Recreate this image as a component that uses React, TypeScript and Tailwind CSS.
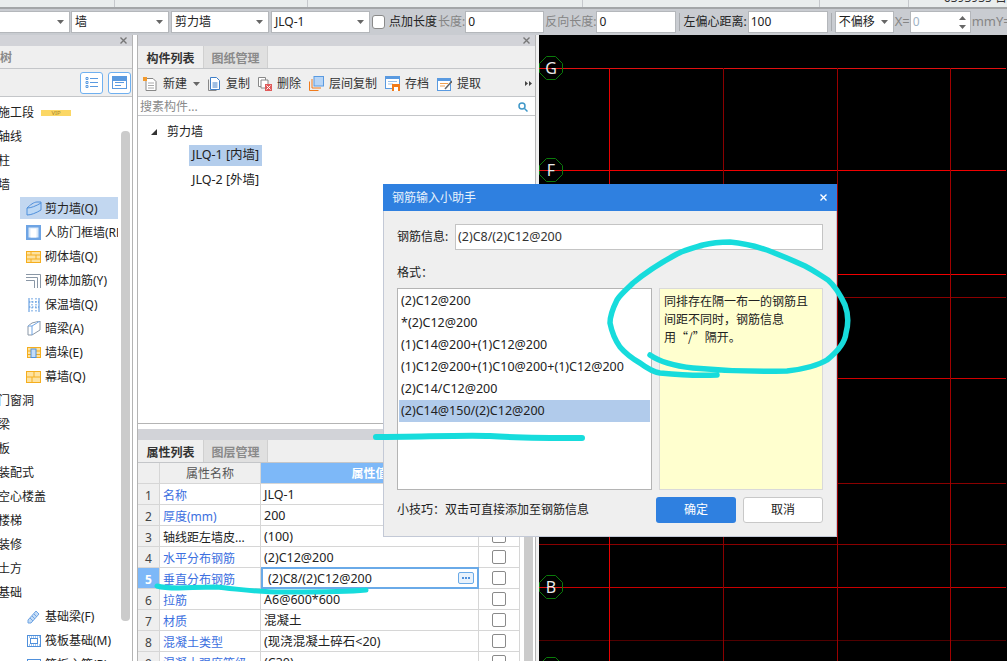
import type { ReactNode } from "react";

const FONT = "[font-family:'Noto_Sans','Noto_Sans_CJK_SC',sans-serif]";

function Caret({ className = "" }: { className?: string }) {
  return (
    <svg width="7" height="4" viewBox="0 0 7 4" className={className}>
      <path d="M0 0h7L3.5 4z" fill="#666" />
    </svg>
  );
}

function Close({ x = "#777" }: { x?: string }) {
  return (
    <svg width="7" height="7" viewBox="0 0 7 7">
      <path d="M0.5 0.5l6 6M6.5 0.5l-6 6" stroke={x} strokeWidth="1.4" />
    </svg>
  );
}

// tree icons
const wallIcon = (
  <svg width="16" height="15" viewBox="0 0 16 15" fill="none" stroke="#4f90dc">
    <path d="M1 7c4 0 9-2 14-5v7c-5 3-10 5-14 5z" fill="#bcd8f5" />
    <path d="M1 7c3-3 7-6 10-6h4v1" />
  </svg>
);
const doorIcon = (
  <svg width="15" height="15" viewBox="0 0 15 15">
    <rect width="15" height="15" fill="#6ea4e4" />
    <rect x="2.5" y="2.5" width="10" height="10" fill="#dbe9f8" />
    <rect x="4.5" y="3.5" width="6" height="9" fill="#fff" />
  </svg>
);
const brickIcon = (
  <svg width="15" height="12" viewBox="0 0 15 12" fill="#fde2a0" stroke="#f5ae1e">
    <rect x="0.5" y="0.5" width="14" height="11" />
    <path d="M0.5 4h14M0.5 8h14M5 0.5V4M10 4v4M5 8v3.500" fill="none" />
  </svg>
);
const rebarIcon = (
  <svg width="15" height="14" viewBox="0 0 15 14" fill="none" stroke="#8a97a6">
    <path d="M0 0.500h14.500V14M0 3.500h11.500V14M0 6.500h8.500V14" />
  </svg>
);
const insulationIcon = (
  <svg width="12" height="14" viewBox="0 0 12 14" fill="none" stroke="#4f90dc">
    <path d="M1 0v14M11 0v14" />
    <path d="M4 0v14M8 0v14M1 4h10M1 9h10" strokeDasharray="1.500 1.500" />
  </svg>
);
const beamIcon = (
  <svg width="14" height="15" viewBox="0 0 14 15" fill="#fff" stroke="#8a97a6">
    <path d="M1 5l4-3 8-2v9l-8 5H1z" />
    <path d="M1 5h4l8-5M5 5v9" stroke="#6ea4e4" />
  </svg>
);
const pierIcon = (
  <svg width="14" height="11" viewBox="0 0 14 11" fill="#fde2a0" stroke="#f5ae1e">
    <rect x="0.500" y="0.500" width="13" height="10" />
    <path d="M0.500 4h13M0.500 7.500h13" fill="none" />
    <rect x="4" y="2" width="5" height="8.500" fill="#c4dcf6" stroke="#4f90dc" />
  </svg>
);
const curtainIcon = (
  <svg width="15" height="12" viewBox="0 0 15 12" fill="#fde2a0" stroke="#f5ae1e">
    <rect x="0.500" y="0.500" width="14" height="11" />
    <path d="M0.500 6h14M8 0.500V6M6 6v5.500" fill="none" />
  </svg>
);
const footingIcon = (
  <svg width="13" height="14" viewBox="0 0 13 14" fill="#c4dcf6" stroke="#6ea4e4">
    <path d="M1 10L9 1l3 3-8 9H1z" />
    <path d="M3 8l3 3M5 6l3 3M7 4l3 3" />
  </svg>
);
const raftIcon = (
  <svg width="14" height="12" viewBox="0 0 14 12" fill="none" stroke="#4f90dc">
    <rect x="0.500" y="0.500" width="13" height="11" />
    <rect x="3.500" y="3.500" width="7" height="5" />
    <path d="M0 2h14M0 10h14" strokeDasharray="1 1" />
  </svg>
);
const raftBarIcon = (
  <svg width="14" height="12" viewBox="0 0 14 12" fill="none" stroke="#4f90dc">
    <rect x="0.500" y="0.500" width="13" height="11" />
    <path d="M7 2v7" stroke="#888" />
  </svg>
);

type TreeRow = { label: string; icon?: ReactNode; active?: boolean; vip?: boolean };

const treeRows: TreeRow[] = [
  { label: "施工段", vip: true },
  { label: "轴线" },
  { label: "柱" },
  { label: "墙" },
  { label: "剪力墙(Q)", icon: wallIcon, active: true },
  { label: "人防门框墙(RF", icon: doorIcon },
  { label: "砌体墙(Q)", icon: brickIcon },
  { label: "砌体加筋(Y)", icon: rebarIcon },
  { label: "保温墙(Q)", icon: insulationIcon },
  { label: "暗梁(A)", icon: beamIcon },
  { label: "墙垛(E)", icon: pierIcon },
  { label: "幕墙(Q)", icon: curtainIcon },
  { label: "门窗洞" },
  { label: "梁" },
  { label: "板" },
  { label: "装配式" },
  { label: "空心楼盖" },
  { label: "楼梯" },
  { label: "装修" },
  { label: "土方" },
  { label: "基础" },
  { label: "基础梁(F)", icon: footingIcon },
  { label: "筏板基础(M)", icon: raftIcon },
  { label: "筏板主筋(R)", icon: raftBarIcon },
];

const props = [
  { name: "名称", value: "JLQ-1", link: true },
  { name: "厚度(mm)", value: "200", link: true },
  { name: "轴线距左墙皮...", value: "(100)", link: false },
  { name: "水平分布钢筋", value: "(2)C12@200", link: true },
  { name: "垂直分布钢筋", value: "(2)C8/(2)C12@200", link: true, editing: true },
  { name: "拉筋", value: "A6@600*600", link: true },
  { name: "材质", value: "混凝土", link: true },
  { name: "混凝土类型", value: "(现浇混凝土碎石<20)", link: true },
  { name: "混凝土强度等级", value: "(C30)", link: true },
];

const formats = [
  "(2)C12@200",
  "*(2)C12@200",
  "(1)C14@200+(1)C12@200",
  "(1)C12@200+(1)C10@200+(1)C12@200",
  "(2)C14/C12@200",
  "(2)C14@150/(2)C12@200",
];

function ToolSelect({ label, width }: { label: string; width: string }) {
  return (
    <div className={`${width} h-[22px] bg-white border border-[#b4b7bb] flex items-center justify-between pl-[3px] pr-[5px] shrink-0`}>
      <span>{label}</span>
      <Caret />
    </div>
  );
}

function ToolInput({ value, width }: { value: string; width: string }) {
  return <div className={`${width} h-[22px] bg-white border border-[#b4b7bb] flex items-center pl-[2px] shrink-0`}>{value}</div>;
}

function TopBar() {
  return (
    <>
      <div className="h-[7px] bg-[#e9eded] flex overflow-hidden">
        <div className="w-[115px] border-r border-[#c5c8cc]" />
        <div className="w-[193px] border-r border-[#c5c8cc]" />
        <div className="w-[276px] border-r border-[#c5c8cc]" />
        <div className="w-[237px] border-r border-[#c5c8cc]" />
        <div className="w-[89px] border-r border-[#c5c8cc]" />
        <span className="ml-[35px] -mt-[8px] text-[12px] leading-[12px] text-[#333] whitespace-nowrap">6393935 日</span>
      </div>
      <div className="h-[28px] bg-[#c9ccd1] border-t-2 border-[#a3a6a8] flex items-center text-[12px] text-[#222] whitespace-nowrap overflow-hidden">
        <ToolSelect label="" width="w-[70px] border-l-0" />
        <ToolSelect label="墙" width="w-[98px] ml-[1px]" />
        <ToolSelect label="剪力墙" width="w-[98px] ml-[2px]" />
        <ToolSelect label="JLQ-1" width="w-[99px] ml-[2px]" />
        <div className="w-[13px] h-[14px] ml-[2px] bg-white border border-[#8a8a8a] rounded-[3px] shrink-0" />
        <span className="ml-[4px]">点加长度</span>
        <span className="ml-px text-[#858585]">长度:</span>
        <ToolInput value="0" width="w-[79px]" />
        <span className="ml-[1px] text-[#858585]">反向长度:</span>
        <ToolInput value="0" width="w-[80px]" />
        <div className="w-px h-[18px] bg-[#a8abaf] ml-[3px] shrink-0" />
        <span className="ml-[3px]">左偏心距离:</span>
        <ToolInput value="100" width="w-[80px] ml-[1px]" />
        <div className="w-px h-[18px] bg-[#a8abaf] ml-[3px] shrink-0" />
        <ToolSelect label="不偏移" width="w-[59px] ml-[3px]" />
        <span className="w-[16px] pl-px text-[13px] text-[#858585] shrink-0">X=</span>
        <div className="w-[61px] h-[22px] bg-white border border-[#b4b7bb] flex items-center justify-between pl-[2px] pr-[4px] text-[#9fb3c4] shrink-0">
          0
          <span className="flex flex-col gap-[5px]">
            <Caret className="rotate-180" />
            <Caret />
          </span>
        </div>
        <span className="ml-[1px] text-[13px] text-[#858585]">mmY=</span>
      </div>
    </>
  );
}

function PanelHeader({ height = "h-[11px]" }: { height?: string }) {
  return (
    <div className={`${height} bg-[#d2d3d8] flex items-center justify-end pr-[5px] shrink-0`}>
      <Close />
    </div>
  );
}

function TreePanel() {
  return (
    <div className="w-[132px] flex flex-col bg-white text-[12px] text-[#222] whitespace-nowrap overflow-hidden">
      <PanelHeader />
      <div className="h-[23px] pt-[2px] bg-[#efefef] border-b border-[#c4c6c9] flex items-center font-bold text-[#8a8a8a] shrink-0">
        <span className="-ml-[12px]">件树</span>
      </div>
      <div className="h-[28px] bg-[#efefef] border-b border-[#c4c6c9] flex items-center justify-end gap-[5px] pr-[1px] shrink-0">
        <div className="w-[23px] h-[22px] bg-white border border-[#6fb0f0] rounded-[3px] flex items-center justify-center">
          <svg width="13" height="13" viewBox="0 0 13 13" fill="none" stroke="#5a9ae0">
            <path d="M1 1.500h2v2H1zM1 5.500h2v2H1zM1 9.500h2v2H1zM5 2.500h8M5 6.500h8M5 10.500h8" />
          </svg>
        </div>
        <div className="w-[23px] h-[22px] bg-white border border-[#6fb0f0] rounded-[3px] flex items-center justify-center">
          <svg width="15" height="13" viewBox="0 0 15 13" fill="none" stroke="#5a9ae0">
            <rect x="0.500" y="0.500" width="14" height="12" />
            <path d="M1 3h13" strokeWidth="4" />
            <path d="M3 6.500h9M3 9.500h6" />
          </svg>
        </div>
      </div>
      <div className="flex flex-1 min-h-0">
        <div className="w-[118px] pt-[3px] shrink-0 overflow-hidden">
          {treeRows.map((row) =>
            row.icon ? (
              <div key={row.label} className="h-[24px] flex items-center">
                <div className={`ml-[20px] w-[98px] h-[22px] pt-px flex items-center overflow-hidden ${row.active ? "bg-[#c2d7f0]" : ""}`}>
                  <span className="w-[25px] flex justify-center pl-[2px] shrink-0">{row.icon}</span>
                  {row.label}
                </div>
              </div>
            ) : (
              <div key={row.label} className="h-[24px] pt-px flex items-center -ml-[2px]">
                {row.label}
                {row.vip && (
                  <span className="ml-[7px] w-[30px] h-[6px] bg-[#fbd765] flex items-center justify-center text-[6px] leading-none text-[#a8862a]">
                    VIP
                  </span>
                )}
              </div>
            ),
          )}
        </div>
        <div className="w-[9px] ml-[3px] mt-[34px] h-[490px] bg-[#cbcbcb] rounded-[4px] shrink-0" />
      </div>
    </div>
  );
}

function TabRow({ active, other }: { active: string; other: string }) {
  return (
    <div className="h-[23px] flex bg-[#efefef] border-b border-[#c4c6c9] text-[12px] font-bold shrink-0">
      <div className="w-[65px] pt-[3px] flex items-center justify-center text-[#333]">{active}</div>
      <div className="w-[65px] pt-[3px] flex items-center justify-center bg-[#e0e0e0] text-[#8a8a8a] border-l border-r border-[#d0d0d0]">{other}</div>
    </div>
  );
}

function ToolBtn({ icon, label, caret }: { icon: ReactNode; label: string; caret?: boolean }) {
  return (
    <div className="flex items-center gap-[5px]">
      {icon}
      <span className="pt-px">{label}</span>
      {caret && <Caret className="ml-px" />}
    </div>
  );
}

function ComponentPanel() {
  return (
    <div className="h-[389px] flex flex-col bg-white border-b border-[#b4b4b4] overflow-hidden shrink-0">
      <PanelHeader />
      <TabRow active="构件列表" other="图纸管理" />
      <div className="h-[28px] pt-[2px] bg-[#efefef] border-b border-[#c4c6c9] flex items-center pl-[5px] pr-[3px] gap-[8px] text-[12px] text-[#333] shrink-0 whitespace-nowrap">
        <ToolBtn
          label="新建"
          caret
          icon={
            <svg width="15" height="14" viewBox="0 0 15 14" fill="#fff" stroke="#888">
              <path d="M3 1.500h7l3 3v9H3z" />
              <path d="M5 6h6M5 8.500h6M5 11h6" stroke="#aaa" />
              <path d="M0 0h4v4H0z" fill="#f29a2e" stroke="none" />
            </svg>
          }
        />
        <ToolBtn
          label="复制"
          icon={
            <svg width="13" height="14" viewBox="0 0 13 14" fill="#fff" stroke="#3f7fc8">
              <path d="M0.500 2.500v11h8" fill="none" stroke="#888" />
              <path d="M2.500 0.500h6l3 3v9h-9z" />
              <path d="M4.500 6h5M4.500 8h5M4.500 10h5" />
            </svg>
          }
        />
        <ToolBtn
          label="删除"
          icon={
            <svg width="14" height="14" viewBox="0 0 14 14" fill="#fff" stroke="#888">
              <path d="M0.500 0.500h7v9h-7z" />
              <path d="M3 3h7v8H3z" />
              <rect x="7" y="7" width="7" height="7" fill="#e05a5a" stroke="none" />
              <path d="M8.500 8.500l4 4M12.500 8.500l-4 4" stroke="#fff" />
            </svg>
          }
        />
        <ToolBtn
          label="层间复制"
          icon={
            <svg width="15" height="15" viewBox="0 0 15 15" fill="none">
              <rect x="5" y="0.500" width="9.500" height="9.500" fill="#b7d5f6" stroke="#5a9ae0" />
              <path d="M3 3v9h9M0.500 5.500v9h9" stroke="#f07b1c" />
            </svg>
          }
        />
        <ToolBtn
          label="存档"
          icon={
            <svg width="15" height="15" viewBox="0 0 15 15" fill="none" stroke="#5a9ae0">
              <rect x="0.500" y="0.500" width="14" height="12" fill="#fff" />
              <path d="M1 2h13" strokeWidth="2" />
              <path d="M3 5.500h9M3 8h5" stroke="#9ac0ea" />
              <rect x="7" y="8" width="8" height="7" fill="#f07b1c" stroke="none" />
              <rect x="9" y="11" width="4" height="4" fill="#fff" stroke="none" />
            </svg>
          }
        />
        <ToolBtn
          label="提取"
          icon={
            <svg width="15" height="14" viewBox="0 0 15 14" fill="none" stroke="#5a9ae0">
              <rect x="0.500" y="1.500" width="13" height="12" fill="#fff" />
              <path d="M1 3h12" strokeWidth="2" />
              <path d="M3 6.500h8M3 9h5" stroke="#f0a050" />
              <path d="M8 12l7-8" stroke="#666" strokeWidth="1.500" />
            </svg>
          }
        />
        <svg width="7" height="5" viewBox="0 0 7 5" className="ml-auto">
          <path d="M0 0l3 2.500L0 5zM4 0l3 2.500L4 5z" fill="#444" />
        </svg>
      </div>
      <div className="h-[19px] pt-[2px] bg-white border-b border-[#c4c6c9] flex items-center justify-between pl-[2px] pr-[7px] text-[12px] text-[#8a8a8a] shrink-0">
        搜素构件...
        <svg width="10" height="10" viewBox="0 0 10 10" fill="none" stroke="#3f97c8" strokeWidth="1.500">
          <circle cx="4" cy="4" r="3" />
          <path d="M6.500 6.500L9.500 9.500" />
        </svg>
      </div>
      <div className="text-[12.5px] text-[#222] pt-[4px]">
        <div className="h-[23px] flex items-center pl-[13px]">
          <svg width="6" height="6" viewBox="0 0 6 6">
            <path d="M6 0v6H0z" fill="#333" />
          </svg>
          <span className="ml-[10px] text-[12px]">剪力墙</span>
        </div>
        <div className="h-[24px] flex items-center pl-[51px]">
          <span className="h-[21px] flex items-center px-[3px] bg-[#b3cdec]">JLQ-1 [内墙]</span>
        </div>
        <div className="h-[24px] pt-[2px] flex items-center pl-[51px]">
          <span className="px-[3px]">JLQ-2 [外墙]</span>
        </div>
      </div>
    </div>
  );
}

function PropertyPanel() {
  return (
    <div className="flex-1 flex flex-col mt-[5px] bg-white min-h-0 overflow-hidden">
      <PanelHeader height="h-[11px]" />
      <TabRow active="属性列表" other="图层管理" />
      <div className="flex min-h-0">
        <div className="w-[382px] shrink-0 text-[12px] text-[#222] whitespace-nowrap">
          <div className="h-[21px] flex border-b border-[#d6d6d6] bg-[#efefef]">
            <div className="w-[22px] border-r border-[#d6d6d6]" />
            <div className="w-[101px] pt-px border-r border-[#d6d6d6] flex items-center justify-center text-[#555]">属性名称</div>
            <div className="w-[218px] pt-px bg-[#7db8f8] border-r border-[#d6d6d6] flex items-center justify-center font-bold text-white">属性值</div>
            <div className="flex-1 border-r border-[#d6d6d6]" />
          </div>
          {props.map((row, i) => (
            <div key={row.name} className="h-[21px] flex border-b border-[#d6d6d6]">
              <div className={`w-[22px] pt-[3px] border-r border-[#d6d6d6] flex items-center justify-center ${row.editing ? "bg-[#7db8f8] font-bold text-white" : "bg-[#efefef] text-[#444]"}`}>
                {i + 1}
              </div>
              <div className={`w-[101px] pt-[3px] border-r border-[#d6d6d6] flex items-center pl-[3px] ${row.link ? "text-[#3c6fe0]" : ""}`}>{row.name}</div>
              {row.editing ? (
                <div className="w-[218px] text-[12.5px] border-2 border-[#6aaae8] -my-px flex items-center justify-between pl-[5px] pr-[3px]">
                  <span className="pt-[3px]">{row.value}</span>
                  <span className="w-[16px] h-[12px] border border-[#6aaae8] rounded-[2px] bg-[#e8f2fc] flex items-center justify-center gap-px">
                    <i className="w-[2px] h-[2px] bg-[#4f90dc]" />
                    <i className="w-[2px] h-[2px] bg-[#4f90dc]" />
                    <i className="w-[2px] h-[2px] bg-[#4f90dc]" />
                  </span>
                </div>
              ) : (
                <div className="w-[218px] pt-[3px] text-[12.5px] border-r border-[#d6d6d6] flex items-center pl-[3px]">{row.value}</div>
              )}
              <div className="flex-1 border-r border-[#d6d6d6] flex items-center justify-center">
                <div className="w-[14px] h-[14px] border border-[#8a8a8a] rounded-[2px] bg-white" />
              </div>
            </div>
          ))}
        </div>
        <div className="w-[9px] ml-[4px] bg-[#cbcbcb] shrink-0" />
      </div>
    </div>
  );
}

function Canvas() {
  const hLines = [
    { y: 68, c: "#e01010" },
    { y: 170, c: "#f00000" },
    { y: 274, c: "#f00000" },
    { y: 297, c: "#8a0000" },
    { y: 378, c: "#d00000" },
    { y: 483, c: "#8a0000" },
    { y: 544, c: "#8a0000" },
    { y: 587, c: "#c80000" },
    { y: 640, c: "#500000" },
  ];
  const vLines = [
    { x: 610, c: "#e80000" },
    { x: 724, c: "#8a0000" },
    { x: 838, c: "#9a0000" },
    { x: 951, c: "#a00000" },
  ];
  const axes = [
    { y: 68, t: "G" },
    { y: 170, t: "F" },
    { y: 587, t: "B" },
    { y: 669, t: "A" },
  ];
  return (
    <div className="flex-1 bg-black overflow-hidden">
      <svg width="467" height="626" viewBox="540 35 467 626" className="block">
        {hLines.map((l) => (
          <line key={l.y} x1="540" x2="1007" y1={l.y + 0.5} y2={l.y + 0.5} stroke={l.c} />
        ))}
        {vLines.map((l) => (
          <line key={l.x} x1={l.x + 0.5} x2={l.x + 0.5} y1="68" y2="661" stroke={l.c} />
        ))}
        {axes.map((a) => (
          <g key={a.t}>
            <polygon
              transform={`translate(552 ${a.y})`}
              points="-4.500,-11.500 4.500,-11.500 11.500,-4.500 11.500,4.500 4.500,11.500 -4.500,11.500 -11.500,4.500 -11.500,-4.500"
              fill="none"
              stroke="#0a7a0a"
            />
            <line x1="540" x2="563" y1={a.y + 0.5} y2={a.y + 0.5} stroke="#e01010" />
            <text x="552" y={a.y + 6} textAnchor="middle" fontSize="16" fill="#e8e8e8">
              {a.t}
            </text>
          </g>
        ))}
      </svg>
    </div>
  );
}

function Dialog() {
  return (
    <div className="absolute left-[383px] top-[184px] w-[454px] h-[353px] bg-[#efefef] border-r border-b border-l border-[#c3c9d6] text-[12px] text-[#222]">
      <div className="h-[27px] -mx-px bg-[#2f80e0] flex items-center justify-between pl-[9px] pr-[10px] text-[#e8f2fc]">
        钢筋输入小助手
        <Close x="#fff" />
      </div>
      <div className="pl-[13px] pr-[13px]">
        <div className="flex items-center mt-[13px] h-[26px]">
          <span className="w-[58px]">钢筋信息:</span>
          <div className="flex-1 h-[26px] text-[12.5px] bg-white border border-[#c4c4c4] flex items-center pl-[2px] text-[#333]">(2)C8/(2)C12@200</div>
        </div>
        <div className="mt-[14px] h-[18px] flex items-center">格式：</div>
        <div className="flex mt-[6px] h-[202px] gap-[7px]">
          <div className="w-[255px] bg-white border border-[#b4b4b4] p-px text-[12.5px]">
            {formats.map((f, i) => (
              <div key={f} className={`h-[22px] flex items-center pl-[2px] whitespace-nowrap ${i === 5 ? "bg-[#b1cbeb]" : ""}`}>
                {f}
              </div>
            ))}
          </div>
          <div className="flex-1 bg-[#ffffcf] border border-[#d9d9d9] px-[4px] pt-[3px] leading-[18px] text-[12px] [font-family:'Noto_Sans_CJK_SC',sans-serif]">
            同排存在隔一布一的钢筋且
            <br />
            间距不同时，钢筋信息
            <br />
            用“/”隔开。
          </div>
        </div>
        <div className="flex items-center mt-[7px] h-[26px]">
          <span className="flex-1">小技巧：双击可直接添加至钢筋信息</span>
          <div className="w-[80px] h-[26px] bg-[#2f80e0] rounded-[3px] flex items-center justify-center text-white">确定</div>
          <div className="w-[80px] h-[26px] ml-[7px] bg-white border border-[#c8c8c8] rounded-[3px] flex items-center justify-center">取消</div>
        </div>
      </div>
    </div>
  );
}

function Scribbles() {
  return (
    <svg width="1007" height="661" viewBox="0 0 1007 661" fill="none" stroke="#17dcdc" strokeLinecap="round" strokeLinejoin="round" className="absolute left-0 top-0 pointer-events-none">
      <path
        strokeWidth="5.500"
        d="M650 355C660 362 675 366 693 368C725 371 755 372 787 371C805 369 817 366 827 360C837 352 845 343 846 333C849 322 848 313 845 305C840 294 836 287 828 280C820 275 813 270 805 266C792 260 780 255 767 250C755 246 742 243 730 242C720 242 711 243 703 245C693 248 685 250 677 254C660 263 645 273 633 283C625 291 620 295 617 300C612 310 610 317 610 323C612 333 615 340 620 347C626 354 633 359 640 363C648 369 653 372 660 373C680 375 698 376 717 375"
      />
      <path strokeWidth="6" d="M376 437C420 437 460 435 490 436C520 438 550 438 582 438" />
      <path strokeWidth="5" d="M157 586C170 590 190 587 215 587C240 589 260 593 290 592C320 592 345 592 366 590" />
    </svg>
  );
}

export default function App() {
  return (
    <div className={`relative w-[1007px] h-[661px] overflow-hidden bg-white ${FONT}`}>
      <TopBar />
      <div className="flex h-[626px]">
        <TreePanel />
        <div className="w-[5px] bg-white border-l border-[#b4b4b4] shrink-0" />
        <div className="w-[399px] flex flex-col border-l border-r border-[#b4b4b4] shrink-0">
          <ComponentPanel />
          <PropertyPanel />
        </div>
        <div className="w-[3px] bg-[#f0f0f0] shrink-0" />
        <Canvas />
      </div>
      <Dialog />
      <Scribbles />
    </div>
  );
}
